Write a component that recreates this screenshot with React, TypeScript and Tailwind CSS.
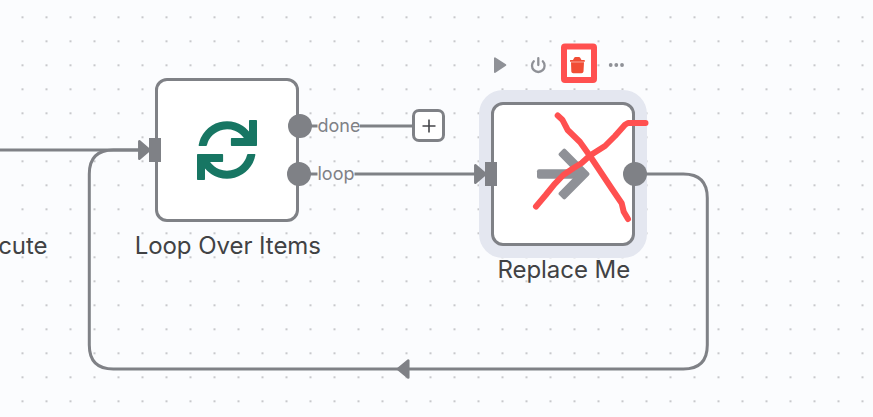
import React from "react";

const LINE = "#7f8186";

function Dots() {
  return (
    <svg className="absolute inset-0" width="873" height="417">
      <defs>
        <pattern id="grid" x="10.5" y="5.3" width="24" height="24" patternUnits="userSpaceOnUse">
          <circle cx="12" cy="12" r="1.1" fill="#bbbcc0" />
        </pattern>
      </defs>
      <rect width="873" height="417" fill="url(#grid)" />
    </svg>
  );
}

function Edges() {
  return (
    <svg className="absolute inset-0" width="873" height="417" fill="none" stroke={LINE} strokeWidth="3">
      <path d="M0 150H142" />
      <path d="M300 126H317.5M360 126H413" />
      <path d="M300 174H317.5M354.5 174H478" />
      <path d="M640 174H683.3Q707.3 174 707.3 198V345Q707.3 369 683.3 369H113.3Q89.3 369 89.3 345V174Q89.3 150 113.3 150H142" />
      <g fill={LINE} strokeWidth="2.5" strokeLinejoin="round">
        <path d="M139.3 141.3V158.7L149.5 150Z" />
        <path d="M475.3 165.3V182.7L485.5 174Z" />
        <path d="M408.3 360.5V377.5L398 369Z" />
      </g>
    </svg>
  );
}

function LoopIcon() {
  const half =
    "M198.9 145.2A28.8 28.8 0 0 1 249.3 131.4V120.8Q249.3 120 250.1 120H256.5Q257.3 120 257.3 120.8V145.2Q257.3 146 256.5 146H232Q231.2 146 231.2 145.2V138.8Q231.2 138 232 138H244.2A20.7 20.7 0 0 0 207.2 145.2Q207 146 206.3 146H199.6Q198.8 146 198.9 145.2Z";
  return (
    <svg className="shrink-0" width="62" height="62" viewBox="196.3 119 62 62" fill="#177663">
      <path d={half} />
      <path d={half} transform="rotate(180 227.3 150)" />
    </svg>
  );
}

function ArrowIcon() {
  return (
    <svg className="shrink-0" width="54" height="54" viewBox="536 147 54 54" fill="#8f9197">
      <rect x="537" y="169.3" width="44" height="9.4" rx="2" />
      <path
        d="M564.3 150.6L587.4 174L564.3 197.4L560.6 193.7L580 174L560.6 154.3Z"
        stroke="#8f9197"
        strokeWidth="4"
        strokeLinejoin="round"
      />
    </svg>
  );
}

function Box({ children, outputs }: { children: React.ReactNode; outputs: React.ReactNode }) {
  return (
    <div className="flex items-center">
      <div className="z-10 -mr-1.5 h-6 w-3 bg-[#7f8186]" />
      <div className="flex size-36 items-center justify-center rounded-xl border-3 border-[#7f8186] bg-white">
        {children}
      </div>
      <div className="z-10 -ml-3 flex w-6 flex-col gap-6">{outputs}</div>
    </div>
  );
}

function Label({ children }: { children: React.ReactNode }) {
  return (
    <div className="whitespace-nowrap text-[24px] font-[430] leading-8 tracking-[-0.05px] text-[#414244]">
      {children}
    </div>
  );
}

function Toolbar() {
  return (
    <div className="absolute left-[493px] top-[43px] flex h-11 items-center">
      <svg className="shrink-0" width="15" height="44" viewBox="493 43 15 44">
        <path d="M494.9 58.3V72L505.4 65.1Z" fill="#8f9197" stroke="#8f9197" strokeWidth="1.8" strokeLinejoin="round" />
      </svg>
      <svg className="ml-[22px] shrink-0" width="17" height="44" viewBox="530 43 17 44" fill="none" stroke="#8f9197" strokeWidth="2.3" strokeLinecap="round">
        <path d="M533.8 61.3A6.3 6.3 0 1 0 542.8 61.3M538.3 58.2V65" />
      </svg>
      <svg className="ml-[13px] shrink-0" width="38" height="44" viewBox="560 43 38 44">
        <rect x="564" y="46.5" width="30" height="33.5" rx="1" fill="#fff" stroke="#ff5050" strokeWidth="6" strokeLinejoin="round" />
        <path d="M570 60.3Q570 60 570.5 60H573L574.2 57.7Q574.6 57 575.5 57H579Q579.8 57 580.2 57.7L581.5 60H584.2Q584.8 60 584.8 60.3V61.8H570ZM571 62.3H584L583.5 71.5Q583.3 73.3 581.5 73.3H573.3Q571.5 73.3 571.3 71.5Z" fill="#f14d35" />
      </svg>
      <svg className="ml-[10px] shrink-0" width="18" height="44" viewBox="608 43 18 44" fill="#8f9197">
        <circle cx="610.7" cy="65" r="1.9" />
        <circle cx="616.3" cy="65" r="1.9" />
        <circle cx="622" cy="65" r="1.9" />
      </svg>
    </div>
  );
}

export default function App() {
  return (
    <main className="relative h-[417px] w-[873px] overflow-hidden bg-[#fbfcfe] font-[Inter,sans-serif]">
      <Dots />
      <div className="absolute left-[479.3px] top-[90px] size-[168px] rounded-[24px] bg-[#e4e7f0]" />
      <Edges />

      <section className="absolute left-[149.3px] top-[78px] flex w-[162px] flex-col items-center gap-2">
        <Box
          outputs={
            <>
              <div className="ml-px size-6 rounded-full bg-[#7f8186]" />
              <div className="size-6 rounded-full bg-[#7f8186]" />
            </>
          }
        >
          <LoopIcon />
        </Box>
        <div className="-ml-[5px]">
          <Label>Loop Over Items</Label>
        </div>
      </section>

      <section className="absolute left-[485.3px] top-[102px] flex w-[162px] flex-col items-center gap-2">
        <Box outputs={<div className="size-6 rounded-full bg-[#7f8186]" />}>
          <ArrowIcon />
        </Box>
        <div className="-ml-[5px]">
          <Label>Replace Me</Label>
        </div>
      </section>

      <div className="absolute left-0 top-[230px] flex w-[47.5px] justify-end">
        <Label>cute</Label>
      </div>

      <div className="absolute left-[317.5px] top-[114px] flex flex-col gap-6 text-[18px] leading-6 text-[#7f8186]">
        <span>done</span>
        <span>loop</span>
      </div>

      <div className="absolute left-[412.3px] top-[109.3px] flex size-[33px] items-center justify-center rounded-[7px] border-3 border-[#7f8186] bg-white">
        <svg width="14" height="14" stroke="#45464a" strokeWidth="1.6">
          <path d="M7 .5V13.5M.5 7H13.5" />
        </svg>
      </div>

      <Toolbar />
      <svg className="absolute inset-0 z-20" width="873" height="417" fill="none" stroke="#ff5050" strokeWidth="6" strokeLinecap="round" strokeLinejoin="round">
        <path d="M557.7 115.5L562.3 119.7L567.7 130L580 142L590 156L600 171L612 189L621.7 203.3L623.7 211.7L628 219" />
        <path d="M536 206.5L545.7 195L554.3 184.3L563.3 175L573.3 168.3L581.7 163L590 155.5L605 146L615 136L625 124.8L628 123H645.5" />
      </svg>
    </main>
  );
}
